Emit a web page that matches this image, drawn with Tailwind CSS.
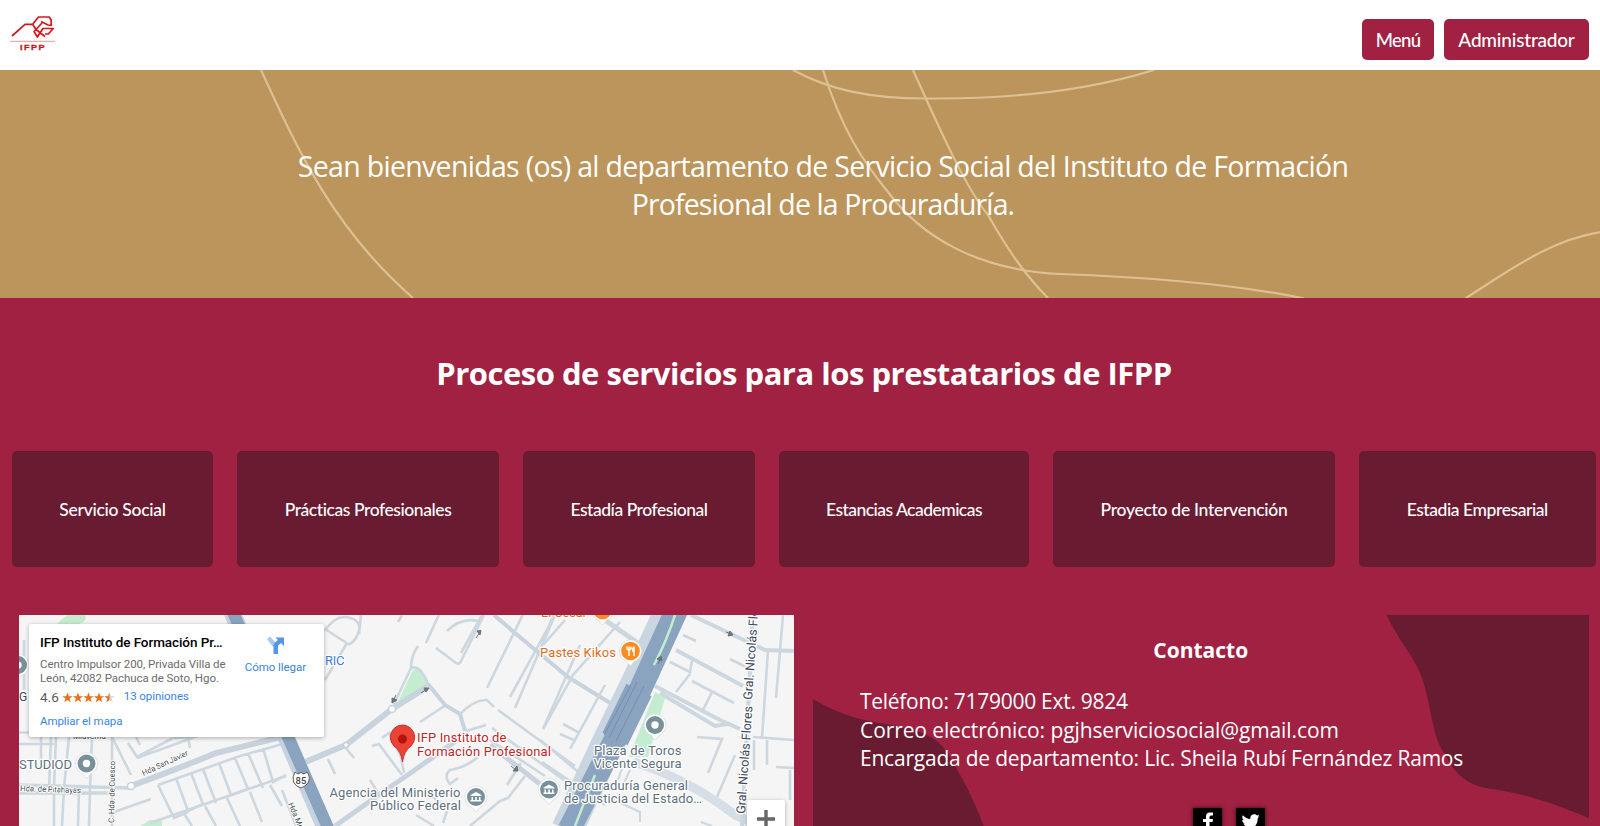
<!DOCTYPE html>
<html lang="es">
<head>
<meta charset="utf-8">
<title>IFPP Servicio Social</title>
<script src="https://cdn.jsdelivr.net/npm/@tailwindcss/browser@4"></script>
</head>
<body class="h-[826px] overflow-hidden bg-[#a02142] font-['Open_Sans',sans-serif] text-white">
<header class="flex h-[70px] items-start justify-between bg-white pr-[11px] pl-[8px]">
  <svg class="mt-[12px] h-[42px] w-[50px]" viewBox="8 12 50 42" fill="none" stroke="#d5161c">
    <path stroke-width="1.700" stroke-linejoin="round" d="M12 36L25 24.300H32.700L38.500 17H49.200L51.200 20V25.500L48 25L41 21.500M32.700 24.300L36 29.500L45 36.500M42 23L34 31.500L37.300 37L43 28.500H53.300L48.300 34H45"/>
    <path stroke="#e58a8c" stroke-width=".9" d="M10 41.300H55"/>
    <text x="20" y="50" textLength="26" lengthAdjust="spacingAndGlyphs" font-family="Liberation Sans" font-weight="bold" font-size="7.500" fill="#c8141c" stroke="#c8141c" stroke-width=".3" letter-spacing="1.200">IFPP</text>
  </svg>
  <nav class="mt-[19px] flex gap-[10px] font-['Lato',sans-serif] text-[19px] font-medium">
    <a class="flex h-[41px] w-[72px] items-center justify-center rounded-[5px] bg-[#a02142] pt-[2px]"><span class="text-[18.5px] tracking-[-0.7px]">Menú</span></a>
    <a class="flex h-[41px] w-[145px] items-center justify-center rounded-[5px] bg-[#a02142] pt-[2px]"><span class="tracking-[-0.2px]">Administrador</span></a>
  </nav>
</header>

<section class="relative h-[227.5px] bg-[#bc955c]">
  <svg class="absolute inset-0 h-full w-full" viewBox="0 70 1600 227.500" fill="none" stroke="#ddc193" stroke-width="2.200">
    <path d="M261 70C300 155 335 230 413 298"/>
    <path d="M793 70C830 90 870 99 930 98.500C1010 99 1090 90 1154 70"/>
    <path d="M823 70C842 130 862 160 888 192C920 235 975 270 1060 274C1140 277 1230 283 1304 298.500"/>
    <path d="M913 70C940 130 967 190 988 215C1008 250 1025 275 1048 298"/>
    <path d="M1466 298C1510 270 1550 240 1601 232"/>
  </svg>
  <h1 class="relative flex flex-col items-center pt-[77px] pl-[46px] text-[28.5px] leading-[38px]">
    <span class="tracking-[-0.69px]">Sean bienvenidas (os) al departamento de Servicio Social del Instituto de Formación</span>
    <span class="tracking-[-0.9px]">Profesional de la Procuraduría.</span>
  </h1>
</section>

<section class="flex justify-center pt-[52.5px] pl-[8px]">
  <h2 class="text-[31px] leading-[46px] font-bold tracking-[-0.49px]">Proceso de servicios para los prestatarios de IFPP</h2>
</section>

<section class="mt-[55px] flex h-[116px] gap-[24px] pl-[12px] font-['Lato',sans-serif] text-[17.5px] font-medium">
  <a class="flex w-[201px] items-center justify-center rounded-[5px] bg-[#691b31] pt-[2px]"><span class="tracking-[-0.28px]">Servicio Social</span></a>
  <a class="flex w-[262px] items-center justify-center rounded-[5px] bg-[#691b31] pt-[2px]"><span class="tracking-[-0.42px]">Prácticas Profesionales</span></a>
  <a class="flex w-[232px] items-center justify-center rounded-[5px] bg-[#691b31] pt-[2px]"><span class="tracking-[-0.46px]">Estadía Profesional</span></a>
  <a class="flex w-[250px] items-center justify-center rounded-[5px] bg-[#691b31] pt-[2px]"><span class="tracking-[-0.53px]">Estancias Academicas</span></a>
  <a class="flex w-[282px] items-center justify-center rounded-[5px] bg-[#691b31] pt-[2px]"><span class="tracking-[-0.28px]">Proyecto de Intervención</span></a>
  <a class="flex w-[236.5px] items-center justify-center rounded-[5px] bg-[#691b31] pt-[2px]"><span class="tracking-[-0.43px]">Estadia Empresarial</span></a>
</section>

<main class="mt-[48px] flex h-[211px] gap-[19px] pl-[19px]">
  <div class="relative w-[774.5px] overflow-hidden bg-[#f5f5f5]">
    <svg class="absolute inset-0 h-full w-full" viewBox="19 615 774.500 211" font-family="Roboto" font-size="13">
      <g fill="#c3ecd0">
        <path d="M55 627Q62 618 68 615H85Q88 621 79 624Z"/>
        <path d="M396 706L412 672Q415 666 420 670L429 684Z"/>
        <path d="M140 826L150 820L162 821V826Z"/>
      </g>
      <g fill="none" stroke="#cdd7e0" stroke-width="2.600">
        <!-- west side grid -->
        <path d="M19 732.500H30M19 744H54M56 737L54 787V826M51 737L49 790M69 737L64 788L62 826M92 737L90 790L89 826M79 788L78 826M112 737V765M112 775V826M112 737L131 775M41 737V770M24 640V690"/>
        <path stroke-width="3.500" d="M19 785L131 788M19 793L110 793"/>
        <path d="M128 743L137 757L173 738M134 733L140 745M137 758L220 728M173 738L196 737M188 737L190 748"/>
        <path d="M158 785L240 756L286 743M158 785L174 818L188 812M176 778L188 811L203 804L191 773M203 769L216 803M219 763L231 795L248 789L235 758M248 753L263 788M263 748L273 782L286 775"/>
        <path d="M114 812L151 799M150 823L286 776M183 812L192 826M205 806L216 826M227 798L240 826M250 792L262 822M270 785L282 806M282 790L296 826"/>
        <!-- centre streets -->
        <path d="M325 630Q335 616 346 617Q365 620 357 636Q350 648 345 642L325 629M361 615L359 634M347 643L325 680M398 622L402 615"/>
        <path d="M426 643L441 610M418 646Q411 656 411 668L394 704M411 668Q420 664 428 684M436 648L456 663Q459 665 461 661L484 615M461 653L482 615M447 631Q461 617 478 621M460 714Q475 699 487 700L494 707M498 710L575 766M420 722L446 705"/>
        <path d="M487 688L530 600M510 697L548 628L560 600M515 708L555 615M543 729L580 645M492 728L575 788M466 731L486 725"/>
        <path d="M328 759L335 774M345 747L354 758M370 780L378 793M404 724L410 735M372 746L379 744L402 775M382 738L389 733L401 757L404 773"/>
        <path d="M478 757Q465 768 450 770Q443 776 450 784L458 778M507 785L521 763M525 776L508 798L500 801L470 826M430 795L448 808L443 823M416 815L434 826M490 740L545 776"/>
      </g>
      <g fill="none" stroke="#c8d3de">
        <path stroke-width="6" d="M298 765L346 745L392 709L427 687M131 786Q180 768 216 753L290 735"/>
        <path stroke-width="5" d="M335 826L380 794L412 772L460 738M490 745L545 788"/>
        <path stroke-width="4" d="M428 684L445 705L460 714L465 731M494 615L515 633L568 677L615 706"/>
      </g>
      <!-- east side grid -->
      <g fill="none" stroke="#cdd7e0" stroke-width="2.600">
        <path d="M543 645L565 620M543 729L573 675L620 622M570 749L605 685M563 724L578 732M560 734L576 741M540 740L600 790M542 762L605 805"/>
        <path stroke-width="5" d="M605 620L645 648"/>
        <path stroke-width="4" d="M676 650L743 686M655 686L720 720L740 729M660 693L715 726L728 724M691 615L748 642L765 650L794 651"/>
        <path d="M683 635L696 641M670 662L690 672L692 660M690 674L676 692M692 681L734 703M712 692L703 710M730 659L746 667M697 737L722 739L708 773M735 755L714 804M768 650L762 738M783 615L776 698M753 737L794 740M767 740V765M776 767L794 768M790 770V800M754 740V770"/>
        <path d="M608 797L640 812V822M622 768L618 780M630 770L624 783M701 822L712 826" stroke-width="2"/>
        <path stroke-width="9" stroke="#d6dfe7" d="M634 762Q690 780 735 815L760 826"/>
        <path stroke-width="4" d="M753 615L742 826"/>
      </g>
      <!-- highways -->
      <g fill="none">
        <path stroke="#c6d2df" stroke-width="17" d="M231 610L286 737L326 830"/>
        <path stroke="#8aa3bf" stroke-width="12" d="M232 610L288 737L329 830"/>
        <path stroke="#c9d5e1" stroke-width="32" d="M673 605L637 683L610 738L567 830"/>
        <path fill="#c3ecd0" d="M655 692L665 698L648 757H629Z"/>
        <path stroke="#8aa3bf" stroke-width="23" d="M679 605L640 690L615 740L569 830"/>
        <path stroke="#8aa3bf" stroke-width="28" d="M639 690L615 739"/>
        <path stroke="#7089a9" stroke-width=".8" d="M637 682L609 738M644 686L616 741M631 685L604 735"/>
        <path stroke="#c3ecd0" stroke-width="2.500" d="M675 615Q667 640 654 665M595 775L575 826"/>
      </g>
      <g fill="#fff" stroke="#c6d2df" stroke-width="1.500"><circle cx="131" cy="786" r="3.500"/><circle cx="392" cy="709" r="3.500"/><circle cx="346" cy="745" r="2.500"/></g>
      <!-- direction arrows -->
      <g stroke="#6b737b" stroke-width="1" fill="#6b737b">
        <path d="M476 638L480 632M477 631L481 630.500L480 635ZM396 695L393 701M392 698L392 703L397 700ZM421 693L427 689M424 688L429 688L426 692ZM511 766L516 770M517 766L518 771L513 771ZM726 632L732 634M730 631L733 635L728 636ZM658 664L661 658M657 659L661 656L662 661Z"/>
      </g>
      <g fill="#5e707d" stroke="#fff" stroke-width="2.500" paint-order="stroke" stroke-linejoin="round">
        <text x="19" y="769" textLength="53">STUDIOD</text>
        <text x="329.500" y="797" textLength="131">Agencia del Ministerio</text>
        <text x="370" y="810" textLength="91">Público Federal</text>
        <text x="594" y="754.500" textLength="87.500">Plaza de Toros</text>
        <text x="593.500" y="768" textLength="88">Vicente Segura</text>
        <text x="564" y="790" textLength="124">Procuraduría General</text>
        <text x="564" y="803" textLength="138">de Justicia del Estado…</text>
        <text x="19" y="701" font-size="12" fill="#38485b">G</text>
        <g fill="#454b50" font-size="8" stroke-width="2">
          <text x="20" y="791" textLength="61" transform="rotate(2 20 791)">Hda. de Pitahayas</text>
          <text transform="translate(114 823) rotate(-89)" textLength="62">C. Hda. de Cuesco</text>
          <text transform="translate(143.500 776) rotate(-25)" textLength="50">Hda San Javier</text>
          <text transform="translate(288 804) rotate(67)">Hda Moctezuma</text>
          <text x="73" y="738.500">Miaverna</text>
        </g>
        <g fill="#38485b" font-size="12.500">
          <text transform="translate(745 814) rotate(-86)" textLength="108">Gral. Nicolás Flores</text>
          <text transform="translate(752 700) rotate(-86)" textLength="108">Gral. Nicolás Flores</text>
        </g>
        <g fill="#dc6c1b"><text x="540" y="656.500" textLength="76">Pastes Kikos</text><text x="541" y="617" textLength="46">El Cesar</text></g>
        <text x="325" y="664.500" textLength="19.500" fill="#3f7de0">RIC</text>
        <g fill="#bb2627"><text x="417" y="742" textLength="89.500">IFP Instituto de</text><text x="417" y="755.500" textLength="134">Formación Profesional</text></g>
      </g>
      <!-- place markers -->
      <defs>
        <path id="pin" d="M0 15L-4 10.300A11 11 0 1 1 4 10.300Z" fill="#fff" stroke="#cfd3d6" stroke-width=".6"/>
        <g id="bank"><use href="#pin"/><circle r="9" fill="#78909c"/><path fill="#fff" d="M-5.500-2L0-5L5.500-2V-1H-5.500ZM-4.500 0H-3V3H-4.500ZM-.8 0H.8V3H-.8ZM3 0H4.500V3H3ZM-5.500 3H5.500V4.500H-5.500Z"/></g>
        <g id="dot"><use href="#pin"/><circle r="9" fill="#78909c"/><circle r="3.700" fill="#fff"/></g>
        <g id="food"><use href="#pin"/><circle r="9.300" fill="#fb8c24"/><path fill="none" stroke="#fff" stroke-width="1.400" d="M-3.500-4.500V-1.500M-1.500-4.500V5M.500-4.500V-1.500M-3.500-1.500H.500M3.500-4.500V5M3-4Q1.500 0 3 1"/></g>
      </defs>
      <use href="#dot" x="86.500" y="763.500"/><use href="#dot" x="18" y="665"/><use href="#dot" x="655" y="725"/>
      <use href="#bank" x="476" y="797"/><use href="#bank" x="549" y="789.500"/>
      <use href="#food" x="630.500" y="651"/><use href="#food" x="602.500" y="610"/>
      <path d="M402.500 762Q401 751 394 746A12.200 12.200 0 1 1 411 746Q404 751 402.500 762Z" fill="#ea4335" stroke="#c5221f" stroke-width=".8"/><circle cx="402.500" cy="739" r="4.500" fill="#b31412"/>
      <path d="M295 772L298 774L301 772.500L304 774L307 772Q311 777 308 783Q306 786 301 788Q295 786 293.500 782Q292 777 295 772Z" fill="#fff" stroke="#6b5a50"/>
      <text x="301" y="783.500" text-anchor="middle" font-size="9.500" font-weight="500" fill="#444">85</text>
    </svg>

    <div class="absolute top-[9px] left-[10px] flex h-[113px] w-[295px] justify-between rounded-[2px] bg-white pr-[18px] pl-[11px] font-['Roboto',sans-serif] text-[11.5px] text-[#5b5b5b] shadow-[0_1px_4px_rgba(0,0,0,0.3)]">
      <div class="pt-[9px]">
        <p class="text-[13.5px] leading-[18px] font-medium tracking-[-0.08px] text-black">IFP Instituto de Formación Pr…</p>
        <p class="mt-[6px] leading-[14px] tracking-[-0.07px] whitespace-nowrap text-[#6b6b6b]">Centro Impulsor 200, Privada Villa de<br>León, 42082 Pachuca de Soto, Hgo.</p>
        <div class="mt-[3px] flex h-[18px] items-center">
          <span class="text-[13.5px]">4.6</span>
          <svg class="ml-[3px] h-[11px] w-[53px]" viewBox="0 0 53 11">
            <defs><path id="star" d="M5 .5L6.400 4.200H10.200L7.100 6.500L8.200 10.200L5 8L1.800 10.200L2.900 6.500L-.2 4.200H3.600Z"/></defs>
            <g fill="#e7711b"><use href="#star" x=".5"/><use href="#star" x="11"/><use href="#star" x="21.500"/><use href="#star" x="32"/></g>
            <use href="#star" x="42.500" fill="#d5d5d5"/><path fill="#e7711b" d="M47.500 .5V8L44.300 10.200L45.400 6.500L42.300 4.200H46.100Z"/>
          </svg>
          <span class="ml-[9px] tracking-[-0.05px] text-[#3a84df]">13 opiniones</span>
        </div>
        <p class="mt-[7px] leading-[16px] tracking-[-0.07px] text-[#3a84df]">Ampliar el mapa</p>
      </div>
      <div class="flex flex-col items-center pt-[11px] text-[#3a84df]">
        <svg class="ml-[2px] h-[20px] w-[20px]" viewBox="0 0 20 20"><path fill="#a9c8f5" d="M1 4L4 1.500L10 8L7 12Z"/><path fill="#5494ec" d="M7.500 19V11Q7.500 9 9 7.500L12 5L9.500 2.500H18V11L15 8L12 10.500V19Z"/></svg>
        <span class="mt-[4px] leading-[16px] tracking-[-0.05px]">Cómo llegar</span>
      </div>
    </div>
    <div class="absolute top-[185px] left-[727.5px] flex h-[40px] w-[38px] justify-center rounded-[2px] bg-white pt-[10px] shadow-[0_1px_4px_rgba(0,0,0,0.3)]">
      <svg class="h-[18px] w-[18px]" viewBox="0 0 18 18"><path fill="#666" d="M7.300 0H10.700V7.300H18V10.700H10.700V18H7.300V10.700H0V7.300H7.300Z"/></svg>
    </div>
  </div>

  <div class="relative w-[776.5px] overflow-hidden">
    <svg class="absolute inset-0 h-full w-full" viewBox="812.500 615 776.500 211" fill="#691b31">
      <path d="M1386 615C1398 640 1412 655 1420 674C1432 705 1430 735 1445 755C1453 772 1465 784 1485 788C1515 792 1540 798 1589 818.500V615Z"/>
      <path d="M812 699C832 710 850 719 885 724C925 730 940 740 948 755C960 775 972 795 983 826H812Z"/>
    </svg>
    <div class="relative flex flex-col">
      <h3 class="pt-[21px] text-center text-[21px] leading-[28px] font-bold">Contacto</h3>
      <div class="mt-[23px] pl-[47.500px] text-[21px] leading-[28.5px]">
        <p class="tracking-[-0.28px]">Teléfono: 7179000 Ext. 9824</p>
        <p class="tracking-[-0.1px]">Correo electrónico: pgjhserviciosocial@gmail.com</p>
        <p class="tracking-[-0.22px]">Encargada de departamento: Lic. Sheila Rubí Fernández Ramos</p>
      </div>
      <div class="mt-[35px] flex justify-center gap-[14px] pl-[57px]">
        <a class="h-[29px] w-[29px] bg-black shadow-[0_0_4px_rgba(0,0,0,0.7)]"><svg viewBox="0 0 29 29"><path fill="#fff" d="M13 23V14H10V11H13V8.500Q13 4.500 17 4.500H20V7.500H18Q16.500 7.500 16.500 9V11H20L19.500 14H16.500V23Z"/></svg></a>
        <a class="h-[29px] w-[29px] bg-black shadow-[0_0_4px_rgba(0,0,0,0.7)]"><svg viewBox="0 0 29 29"><path fill="#fff" d="M23.500 8.500L21.700 10.300C22 17 17 21.500 11.500 21.500C9 21.500 7 20.800 5.500 19.800Q8.500 20 10.800 18.200Q8.200 18 7.400 15.600H9Q6.200 14.700 6.200 11.700L7.800 12.200Q5.300 10 6.800 7.200Q10 10.800 14.400 11C13.500 7 18.500 4.500 21 7.500L23.300 6.600L21.900 8.700Z"/></svg></a>
      </div>
    </div>
  </div>
</main>
</body>
</html>
